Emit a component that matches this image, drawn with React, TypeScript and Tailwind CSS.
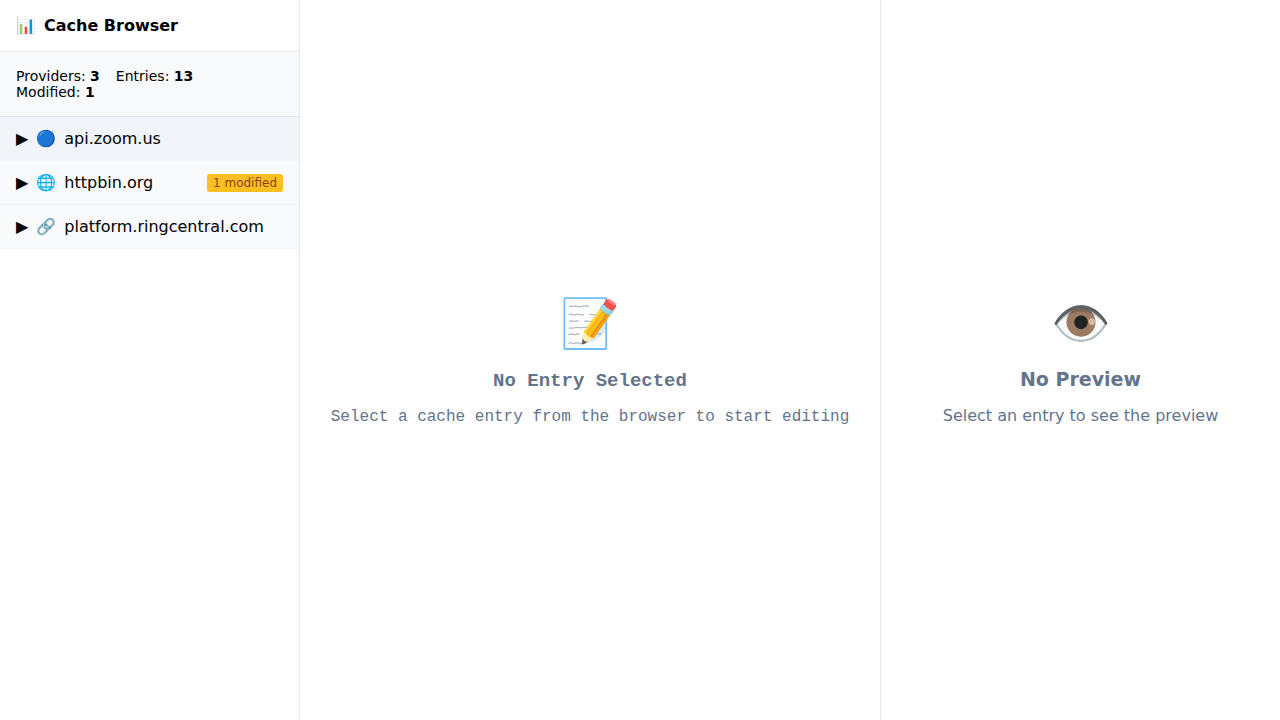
import React from "react";

type Provider = { icon: string; name: string; modified: number; active?: boolean };

const providers: Provider[] = [
  { icon: "🔵", name: "api.zoom.us", modified: 0, active: true },
  { icon: "🌐", name: "httpbin.org", modified: 1 },
  { icon: "🔗", name: "platform.ringcentral.com", modified: 0 },
];

function Stat({ label, value }: { label: string; value: number }) {
  return (
    <span>
      {label}: <strong className="font-bold">{value}</strong>
    </span>
  );
}

function ProviderRow({ provider }: { provider: Provider }) {
  return (
    <li className="border-b border-[#f1f5f9]">
      <button
        type="button"
        aria-expanded={false}
        className={`flex w-full items-center gap-2 px-4 py-3 text-left text-[16px] leading-[19px] ${provider.active ? "bg-[#f1f5f9]" : "bg-[#f8fafc]"}`}
      >
        <span>▶</span>
        <span>{provider.icon}</span>
        <span className="flex-1">{provider.name}</span>
        {provider.modified > 0 && (
          <span className="rounded-[3px] bg-[#fbbf24] px-1.5 py-0.5 text-[12px] leading-[14px] text-[#92400e]">
            {provider.modified} modified
          </span>
        )}
      </button>
    </li>
  );
}

function EmptyState({ icon, title, hint }: { icon: string; title: string; hint: string }) {
  return (
    <div className="flex h-full flex-col items-center justify-center text-center text-[#64748b]">
      <div className="mb-4 text-[48px] leading-[normal]">{icon}</div>
      <h2 className="mb-4 text-[19px] leading-[normal] font-bold">{title}</h2>
      <p className="text-[16px] leading-[normal]">{hint}</p>
    </div>
  );
}

export default function App() {
  return (
    <div className="grid h-screen grid-cols-[300px_1fr_400px] bg-white font-['DejaVu_Sans',sans-serif] text-black">
      <aside className="flex flex-col border-r border-[#e2e8f0]">
        <h1 className="flex items-center gap-2 border-b border-[#e2e8f0] p-4 text-[16px] leading-[19px] font-semibold">
          <span>📊</span>
          <span>Cache Browser</span>
        </h1>
        <div className="flex flex-wrap gap-x-4 border-b border-[#e2e8f0] bg-[#f8fafc] p-4 text-[14px] leading-[16px]">
          <Stat label="Providers" value={3} />
          <Stat label="Entries" value={13} />
          <Stat label="Modified" value={1} />
        </div>
        <ul>
          {providers.map((p) => (
            <ProviderRow key={p.name} provider={p} />
          ))}
        </ul>
      </aside>
      <main className="font-['Liberation_Mono',monospace]">
        <EmptyState
          icon="📝"
          title="No Entry Selected"
          hint="Select a cache entry from the browser to start editing"
        />
      </main>
      <section className="border-l border-[#e2e8f0]">
        <EmptyState icon="👁️" title="No Preview" hint="Select an entry to see the preview" />
      </section>
    </div>
  );
}
